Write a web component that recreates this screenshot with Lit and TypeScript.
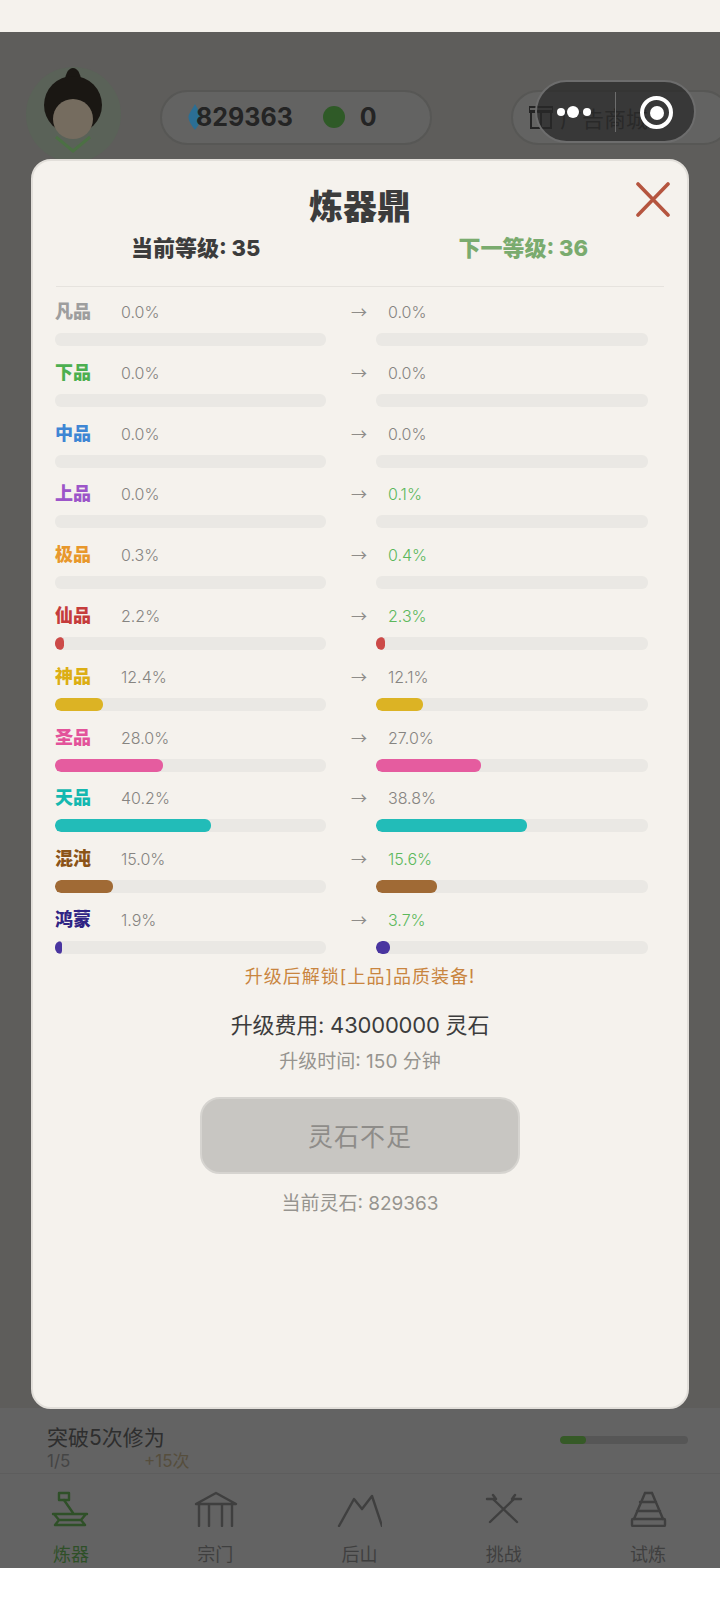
import { LitElement, html, css, svg } from "lit";
import { customElement } from "lit/decorators.js";

interface Q { n: string; c: string; a: number; b: number; fill: string; up?: boolean }
const rows: Q[] = [
  { n: "凡品", c: "#9e9e9e", a: 0, b: 0, fill: "#9e9e9e" },
  { n: "下品", c: "#4caf50", a: 0, b: 0, fill: "#4caf50" },
  { n: "中品", c: "#3f86d4", a: 0, b: 0, fill: "#3f86d4" },
  { n: "上品", c: "#9c55c9", a: 0, b: 0.1, fill: "#9c55c9", up: true },
  { n: "极品", c: "#e8982c", a: 0.3, b: 0.4, fill: "#e8982c", up: true },
  { n: "仙品", c: "#c53c3c", a: 2.2, b: 2.3, fill: "#cc4a48", up: true },
  { n: "神品", c: "#dcae14", a: 12.4, b: 12.1, fill: "#dcb324" },
  { n: "圣品", c: "#e3539a", a: 28.0, b: 27.0, fill: "#e55c9f" },
  { n: "天品", c: "#14b8b0", a: 40.2, b: 38.8, fill: "#22bcb8" },
  { n: "混沌", c: "#8b5418", a: 15.0, b: 15.6, fill: "#a06a35", up: true },
  { n: "鸿蒙", c: "#2f2384", a: 1.9, b: 3.7, fill: "#4a35a0", up: true },
];

const icons = [
  svg`<rect x="11" y="2" width="10" height="7" fill="none"/><path d="M16 9 L25 22"/><path d="M5 23 H39 M8 34 H37 M6 23 L11 29 L7 34 M38 23 L33 29 L37 34 M11 29 H33"/>`,
  svg`<path d="M4 13 L24 2 L44 13 Z"/><path d="M7 14 V35 M17 14 V35 M30 14 V35 M40 14 V35"/>`,
  svg`<path d="M3 35 L18 8 L26 18 L36 5 L46 35"/>`,
  svg`<path d="M9 31 L32 9 M36 31 L13 9"/><path d="M6 8 H15 L12 4 M40 8 H31 L34 4"/>`,
  svg`<path d="M20 2 L9 28 M27 2 L38 28 M20 2 H27 M15 11 H31 M12 20 H35"/><rect x="7" y="28" width="33" height="7" rx="1" fill="none"/>`,
];
const nav = ["炼器", "宗门", "后山", "挑战", "试炼"];

@customElement("app-root")
export class AppRoot extends LitElement {
  static styles = css`
    :host { display: block; width: 720px; height: 1600px; font-family: Inter, "Noto Sans CJK SC", sans-serif; background: #fff; overflow: hidden; }
    .status { height: 32px; background: #f5f2ed; }
    .screen { position: relative; height: 1536px; background: #5e5d5b; display: flex; flex-direction: column; overflow: hidden; }
    .header { display: flex; align-items: center; height: 95px; margin-top: 35px; padding-left: 26px; }
    .avatar { width: 95px; height: 95px; flex: none; display: block; }
    .pill { flex: none; margin-top: 5px; height: 55px; box-sizing: border-box; border: 2px solid #575755; border-radius: 28px; background: #636362; display: flex; align-items: center; }
    .res { margin-left: 39px; width: 272px; padding-left: 26px; color: #242424; font-size: 25px; font-weight: 700; }
    .drop { flex: none; width: 14px; height: 26px; margin-right: -6px; display: block; }
    .gem { flex: none; width: 22px; height: 22px; border-radius: 50%; background: #2f5a27; margin: 0 15px 0 30px; }
    .shop { margin-left: 79px; width: 220px; padding-left: 16px; color: #2c2c2c; font-size: 22px; gap: 7px; white-space: nowrap; }
    .gift { flex: none; width: 24px; height: 24px; display: block; }
    .spacer { flex: 1; }
    .bottom { background: #636363; height: 160px; flex: none; overflow: hidden; }
    .quest { height: 66px; box-sizing: border-box; padding: 17px 32px 0 47px; display: flex; justify-content: space-between; border-bottom: 1px solid #5d5d5d; }
    .q-title { font-size: 21px; line-height: 26px; color: #2e2e2e; }
    .q-sub { font-size: 17px; line-height: 20px; color: #454545; display: flex; }
    .q-sub span:first-child { width: 97px; }
    .q-plus { color: #564e3d; }
    .q-bar { width: 128px; height: 8px; border-radius: 4px; background: #565656; margin-top: 11px; overflow: hidden; }
    .q-fill { width: 26px; height: 100%; border-radius: 4px; background: #365a27; }
    .nav { display: grid; grid-template-columns: repeat(5, 1fr); margin-left: -1px; }
    .nav-item { display: flex; flex-direction: column; align-items: center; padding-top: 17px; color: #3f3f3f; font-size: 18px; line-height: 24px; }
    .nav-item.on { color: #2f5028; }
    .nav-item svg { width: 46px; height: 36px; margin-bottom: 16px; fill: none; stroke: currentColor; stroke-width: 2.4; stroke-linecap: round; stroke-linejoin: round; }

    .capsule { position: absolute; left: 535px; top: 48px; width: 161px; height: 63px; box-sizing: border-box; border: 2px solid #6d6d6d; border-radius: 32px; background: rgba(40,40,40,.72); }
    .dot { position: absolute; background: #fff; border-radius: 50%; }
    .d1 { left: 20px; top: 26px; width: 8px; height: 8px; }
    .d2 { left: 30px; top: 24px; width: 12px; height: 12px; }
    .d3 { left: 46px; top: 26px; width: 8px; height: 8px; }
    .sep { position: absolute; left: 78px; top: 10px; width: 1px; height: 40px; background: #6d6d6d; }
    .ring { position: absolute; left: 103px; top: 14px; width: 33px; height: 33px; box-sizing: border-box; border: 4px solid #fff; border-radius: 50%; display: flex; align-items: center; justify-content: center; }
    .ring i { width: 14px; height: 14px; border-radius: 50%; background: #fff; }

    .modal { position: absolute; left: 31px; top: 127px; width: 658px; height: 1250px; box-sizing: border-box; border: 2px solid #e2dfda; border-radius: 20px; background: #f5f2ed; padding: 22px 23px 0; }
    .close { position: absolute; right: 17px; top: 21px; width: 34px; height: 35px; fill: none; stroke: #b5553f; stroke-width: 3.6; stroke-linecap: round; display: block; }
    .title { text-align: center; font-size: 34px; line-height: 48px; font-weight: 900; color: #3c3c3c; }
    .levels { display: flex; justify-content: space-between; padding: 0 76px 0 75px; margin-top: 2px; font-size: 22px; line-height: 30px; font-weight: 800; color: #3c3c3c; }
    .next { color: #7aab6e; }
    .divider { height: 1px; background: #e6e3de; margin: 23px 0 11px; }
    .rows { display: grid; grid-auto-rows: 46px; row-gap: 14.8px; }
    .row { display: grid; grid-template-columns: 271px 50px 272px; margin-left: -1px; }
    .col { display: flex; flex-direction: column; }
    .line { height: 28px; display: flex; align-items: center; font-size: 16px; font-weight: 300; color: #868481; margin-bottom: 7px; }
    .name { width: 66px; font-size: 18px; line-height: 24px; font-weight: 900; }
    .pct-up { color: #5cb85c; }
    .line.right { padding-left: 12px; }
    .arrow { height: 28px; line-height: 26px; padding-left: 25px; font-size: 16px; color: #8e8c89; font-weight: 400; font-family: "Noto Sans CJK SC", sans-serif; }
    .bar { height: 13px; border-radius: 6px; background: #eae8e4; overflow: hidden; }
    .fill { height: 100%; border-radius: 6px; }
    .note { text-align: center; margin-top: 11px; font-size: 18px; line-height: 28px; color: #c9853f; letter-spacing: 1px; }
    .cost { text-align: center; margin-top: 19px; font-size: 22px; line-height: 30px; color: #3c3c3c; letter-spacing: -0.2px; }
    .time { text-align: center; margin-top: 9px; font-size: 19px; line-height: 26px; color: #96948f; }
    .btn { width: 320px; height: 77px; box-sizing: border-box; margin: 22px auto 0; border: 2px solid #d6d4d0; border-radius: 20px; background: #c8c6c2; color: #8e8c89; font-size: 25px; letter-spacing: 1px; display: flex; align-items: center; justify-content: center; }
    .cur { text-align: center; margin-top: 17px; font-size: 19px; line-height: 26px; color: #96948f; }
  `;

  private bar(v: number, c: string) {
    const w = v < 1 ? 0 : (v / 70) * 100;
    return html`<div class="bar"><div class="fill" style="width:${w}%;background:${c}"></div></div>`;
  }

  render() {
    return html`
      <div class="status"></div>
      <div class="screen">
        <div class="header">
          <svg class="avatar" viewBox="0 0 95 95">
            <circle cx="47.5" cy="47.5" r="47.5" fill="#5a6258"/>
            <ellipse cx="47" cy="14" rx="8" ry="13" fill="#1a1713"/>
            <ellipse cx="47" cy="38" rx="29" ry="29" fill="#1a1713"/>
            <ellipse cx="47" cy="52" rx="20" ry="20" fill="#756c5f"/>
            <path d="M30 70 L47 84 L64 70" fill="none" stroke="#4c7044" stroke-width="3"/>
          </svg>
          <div class="pill res">
            <svg class="drop" viewBox="0 0 12 24"><path d="M6 0 C9 6 12 9 12 12 C12 16 9 20 6 24 C3 20 0 16 0 12 C0 9 3 6 6 0 Z" fill="#2b6f95"/></svg>
            <span>829363</span>
            <span class="gem"></span>
            <span>0</span>
          </div>
          <div class="pill shop">
            <svg class="gift" viewBox="0 0 24 24" fill="none" stroke="#242424" stroke-width="2"><rect x="2" y="6" width="20" height="17"/><path d="M0 2 H24 V7 H0 Z M12 7 V23" /></svg>
            <span>广告商城</span>
          </div>
        </div>
        <div class="spacer"></div>
        <div class="bottom">
          <div class="quest">
            <div>
              <div class="q-title">突破5次修为</div>
              <div class="q-sub"><span>1/5</span><span class="q-plus">+15次</span></div>
            </div>
            <div class="q-bar"><div class="q-fill"></div></div>
          </div>
          <div class="nav">
            ${nav.map((t, i) => html`<div class="nav-item ${i === 0 ? "on" : ""}"><svg viewBox="0 0 46 36">${icons[i]}</svg><span>${t}</span></div>`)}
          </div>
        </div>
        <div class="capsule">
          <span class="dot d1"></span><span class="dot d2"></span><span class="dot d3"></span>
          <span class="sep"></span>
          <span class="ring"><i></i></span>
        </div>
        <div class="modal">
          <svg class="close" viewBox="0 0 34 35"><path d="M2 2 L32 33 M32 2 L2 33"/></svg>
          <div class="title">炼器鼎</div>
          <div class="levels"><span>当前等级: 35</span><span class="next">下一等级: 36</span></div>
          <div class="divider"></div>
          <div class="rows">
            ${rows.map(r => html`
              <div class="row">
                <div class="col">
                  <div class="line"><span class="name" style="color:${r.c}">${r.n}</span><span>${r.a.toFixed(1)}%</span></div>
                  ${this.bar(r.a, r.fill)}
                </div>
                <div class="arrow">→</div>
                <div class="col">
                  <div class="line right"><span class="${r.up ? "pct-up" : ""}">${r.b.toFixed(1)}%</span></div>
                  ${this.bar(r.b, r.fill)}
                </div>
              </div>`)}
          </div>
          <div class="note">升级后解锁[上品]品质装备!</div>
          <div class="cost">升级费用: 43000000 灵石</div>
          <div class="time">升级时间: 150 分钟</div>
          <div class="btn">灵石不足</div>
          <div class="cur">当前灵石: 829363</div>
        </div>
      </div>
    `;
  }
}
